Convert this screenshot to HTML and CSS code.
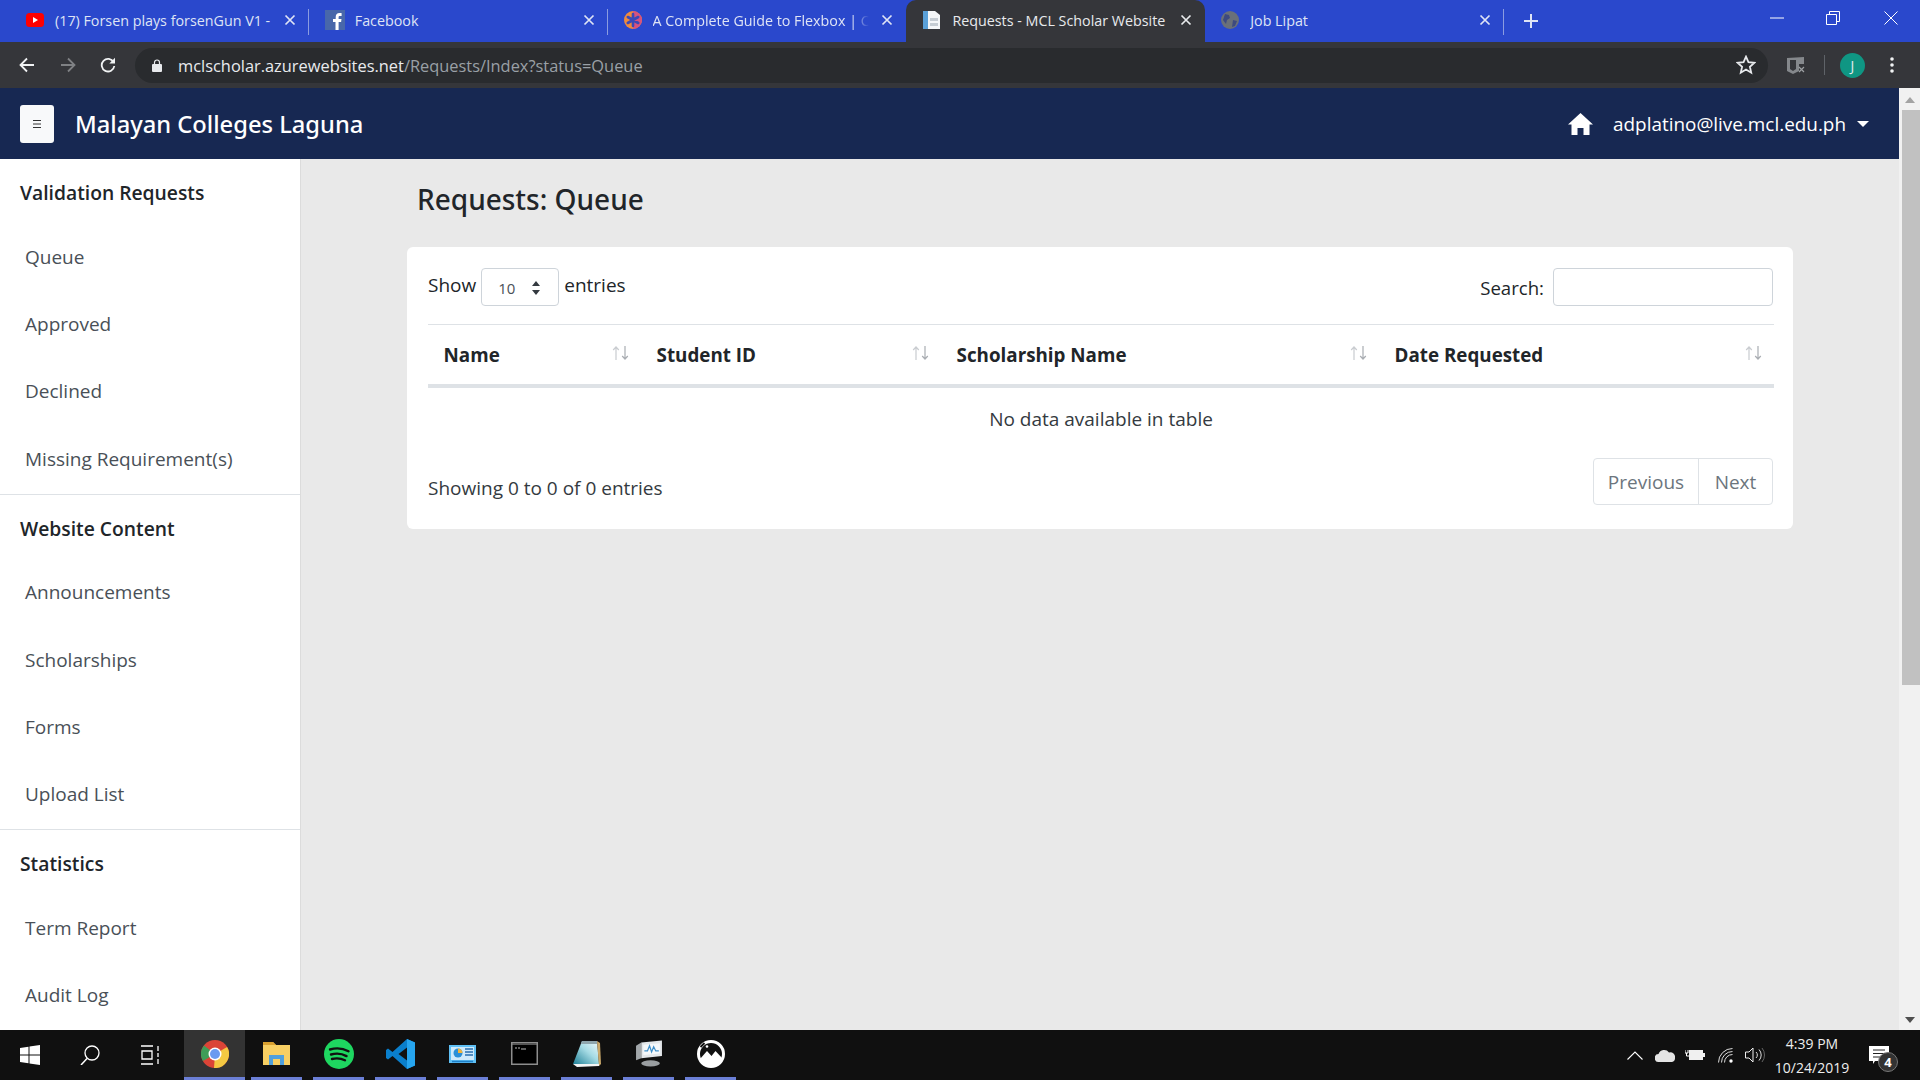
FILE: index.html
```html
<!DOCTYPE html>
<html lang="en">
<head>
    <meta charset="UTF-8">
    <title>Requests - MCL Scholar Website</title>
    <link rel="stylesheet" href="styles.css">
</head>
<body>
<svg class="defs" width="0" height="0">
    <defs>
        <linearGradient id="note-page" x1="0" y1="1" x2="1" y2="0">
            <stop offset="0" stop-color="#1f7f96"/>
            <stop offset=".55" stop-color="#a5dbe4"/>
            <stop offset="1" stop-color="#f2fafb"/>
        </linearGradient>
    </defs>
    <symbol id="sort" viewBox="0 0 17 14">
        <path d="M4 14V1M1.2 4 4 1l2.8 3" fill="none" stroke="#c9ccd0" stroke-width="1.2"/>
        <path d="M13 0v13M10.2 10 13 13l2.8-3" fill="none" stroke="#a9adb2" stroke-width="1.2"/>
    </symbol>
    <symbol id="close" viewBox="0 0 12 12">
        <path d="M1.5 1.5l9 9M10.5 1.5l-9 9" fill="none" stroke="currentColor" stroke-width="1.7"/>
    </symbol>
</svg>
<div class="screen">
    <div class="tabbar">
        <div class="tab">
            <svg class="favicon" viewBox="0 0 18 18"><rect y="2" width="18" height="14" rx="3.5" fill="#f00"/><path d="M7 6l5 3-5 3z" fill="#fff"/></svg>
            <span class="tab-title">(17) Forsen plays forsenGun V1 -</span>
            <svg class="tab-close"><use href="#close"/></svg>
        </div>
        <div class="tab">
            <svg class="favicon favicon-fb" viewBox="0 0 20 20"><rect width="20" height="20" fill="#4867aa"/><path d="M13.6 20v-8h2.5l.4-3h-2.9V7.3c0-.9.3-1.4 1.5-1.4h1.5V3.200c-.3 0-1.200-.1-2.200-.1-2.200 0-3.700 1.300-3.700 3.800V9H8v3h2.500v8z" fill="#fff"/></svg>
            <span class="tab-title">Facebook</span>
            <svg class="tab-close"><use href="#close"/></svg>
        </div>
        <div class="tab">
            <svg class="favicon" viewBox="0 0 18 18"><circle cx="9" cy="9" r="9" fill="#f08a3c"/><path d="M9 0a9 9 0 0 1 0 18z" fill="#d8527e"/><path d="M9 3v12M3.800 6l10.400 6M14.200 6 3.800 12" stroke="#3a49b8" stroke-width="2.600" stroke-linecap="round"/></svg>
            <span class="tab-title tab-fade">A Complete Guide to Flexbox | CS</span>
            <svg class="tab-close"><use href="#close"/></svg>
        </div>
        <div class="tab tab-active">
            <svg class="favicon favicon-doc" viewBox="0 0 20 20"><path d="M1 1h12l5 4v14H1z" fill="#f4f6f8"/><path d="M1 1h5v18H1z" fill="#5aa0d8"/><path d="M8 8h8v3H8zM8 13h8v3H8z" fill="#c5ccd3"/></svg>
            <span class="tab-title">Requests - MCL Scholar Website</span>
            <svg class="tab-close"><use href="#close"/></svg>
        </div>
        <div class="tab">
            <svg class="favicon" viewBox="0 0 18 18"><circle cx="9" cy="9" r="9" fill="#6a7079"/><path d="M4 3l4 1 1 3-3 2-1 4-3-4zM12 9l4 1-2 5-3 1z" fill="#3d4a80"/></svg>
            <span class="tab-title">Job Lipat</span>
            <svg class="tab-close"><use href="#close"/></svg>
        </div>
        <svg class="new-tab" viewBox="0 0 16 16"><path d="M8 1v14M1 8h14" stroke="#dfe4f5" stroke-width="2"/></svg>
        <div class="window-btns">
            <svg class="win-min" viewBox="0 0 14 14"><path d="M0 7h14" stroke="#fff"/></svg>
            <svg viewBox="0 0 14 14"><path d="M.5 3.500h10v10H.5zM3.500 3.500V.5h10v10h-3" fill="none" stroke="#fff"/></svg>
            <svg viewBox="0 0 14 14"><path d="M.5.5l13 13M13.500.5l-13 13" stroke="#fff"/></svg>
        </div>
    </div>

    <div class="toolbar">
        <svg class="tool-icon" viewBox="0 0 16 16"><path d="M15 8H2M8 1.500 1.500 8 8 14.500" fill="none" stroke="#f1f3f4" stroke-width="1.800"/></svg>
        <svg class="tool-icon" viewBox="0 0 16 16"><path d="M1 8h13M8 1.500 14.500 8 8 14.500" fill="none" stroke="#7f8184" stroke-width="1.800"/></svg>
        <svg class="tool-icon" viewBox="0 0 16 16"><path d="M13.600 5.200A6.300 6.300 0 1 0 14.300 9" fill="none" stroke="#f1f3f4" stroke-width="1.800"/><path d="M15 .8V6.500H9.300z" fill="#f1f3f4"/></svg>
        <div class="omnibox">
            <svg class="lock" viewBox="0 0 10 13"><path d="M2.500 5.500V3.500a2.500 2.500 0 0 1 5 0v2" fill="none" stroke="#e8eaed" stroke-width="1.200"/><rect y="5" width="10" height="8" rx="1" fill="#e8eaed"/></svg>
            <span class="url">mclscholar.azurewebsites.net<span class="url-path">/Requests/Index?status=Queue</span></span>
            <svg class="star" viewBox="0 0 18 18"><path d="M9 1.500l2.200 5 5.400.5-4.100 3.600 1.200 5.300L9 13.100l-4.700 2.800 1.200-5.300L1.400 7l5.400-.5z" fill="none" stroke="#e8eaed" stroke-width="1.600"/></svg>
        </div>
        <svg class="ext" viewBox="0 0 18 17"><path d="M0 1l17-1v7h-5v7l-6 3-6-3z" fill="#85888c"/><path d="M3 3h6v9l-3 2-3-2z" fill="#35363a"/><path d="M12 10l5 5M17 10l-5 5" stroke="#9da0a3" stroke-width="1.200"/></svg>
        <div class="tool-sep"></div>
        <div class="avatar">J</div>
        <svg class="dots" viewBox="0 0 4 16"><circle cx="2" cy="2" r="1.800" fill="#f1f3f4"/><circle cx="2" cy="8" r="1.800" fill="#f1f3f4"/><circle cx="2" cy="14" r="1.800" fill="#f1f3f4"/></svg>
    </div>

    <div class="viewport">
        <div class="page">
            <nav class="navbar">
                <button class="menu-btn">
                    <svg viewBox="0 0 8 8"><path d="M0 .5h8M0 4h8M0 7.500h8" stroke="#333"/></svg>
                </button>
                <span class="brand">Malayan Colleges Laguna</span>
                <svg class="home" viewBox="0 0 25 22"><path d="M12.500 0 25 11.500h-3.500V22h-6v-7h-6v7h-6V11.500H0z" fill="#fff"/></svg>
                <span class="user">adplatino@live.mcl.edu.ph</span>
                <span class="caret"></span>
            </nav>
            <div class="page-body">
                <aside class="sidebar">
                    <section class="side-group">
                        <h2>Validation Requests</h2>
                        <a>Queue</a>
                        <a>Approved</a>
                        <a>Declined</a>
                        <a>Missing Requirement(s)</a>
                    </section>
                    <section class="side-group">
                        <h2>Website Content</h2>
                        <a>Announcements</a>
                        <a>Scholarships</a>
                        <a>Forms</a>
                        <a>Upload List</a>
                    </section>
                    <section class="side-group">
                        <h2>Statistics</h2>
                        <a>Term Report</a>
                        <a>Audit Log</a>
                    </section>
                </aside>
                <main class="content">
                    <h1>Requests: Queue</h1>
                    <div class="card">
                        <div class="card-top">
                            <div class="length">
                                <span>Show</span>
                                <div class="select">
                                    <span>10</span>
                                    <svg viewBox="0 0 10 14"><path d="M5 0l4 5H1zM5 14l4-5H1z" fill="#343a40"/></svg>
                                </div>
                                <span>entries</span>
                            </div>
                            <div class="search">
                                <label for="search">Search:</label>
                                <input id="search" type="text">
                            </div>
                        </div>
                        <table class="data">
                            <thead>
                                <tr>
                                    <th class="col-name"><div>Name<svg><use href="#sort"/></svg></div></th>
                                    <th class="col-id"><div>Student ID<svg><use href="#sort"/></svg></div></th>
                                    <th class="col-scholar"><div>Scholarship Name<svg><use href="#sort"/></svg></div></th>
                                    <th><div>Date Requested<svg><use href="#sort"/></svg></div></th>
                                </tr>
                            </thead>
                            <tbody>
                                <tr><td colspan="4">No data available in table</td></tr>
                            </tbody>
                        </table>
                        <div class="card-bottom">
                            <span class="info">Showing 0 to 0 of 0 entries</span>
                            <div class="pager">
                                <a>Previous</a>
                                <a>Next</a>
                            </div>
                        </div>
                    </div>
                </main>
            </div>
        </div>
        <div class="scrollbar">
            <span class="arrow-up"></span>
            <div class="thumb"></div>
            <span class="arrow-down"></span>
        </div>
    </div>

    <div class="taskbar">
        <svg class="sys-icon sys-start" viewBox="0 0 20 20"><path d="M0 3l8.500-1.200V9.500H0zM9.500 1.600 20 0v9.500H9.500zM0 10.500h8.500v7.700L0 17zM9.500 10.500H20V20L9.500 18.400z" fill="#fff"/></svg>
        <svg class="sys-icon sys-search" viewBox="0 0 20 20"><circle cx="12" cy="8" r="7" fill="none" stroke="#fff" stroke-width="1.300"/><path d="M7 13.500 1 20" stroke="#fff" stroke-width="1.500"/></svg>
        <svg class="sys-icon sys-view" viewBox="0 0 20 20"><path d="M1 1h12M1 19h12M2 6h10v8H2zM18 1v5M18 8v4M18 14v5" fill="none" stroke="#fff" stroke-width="1.300"/></svg>
        <div class="task-apps">
            <div class="app app-active">
                <svg class="ico-chrome" viewBox="0 0 28 28"><circle cx="14" cy="14" r="14" fill="#db4437"/><path d="M14 14 1.900 21A14 14 0 0 1 3 5.500z" fill="#3f9d58"/><path d="M14 14 26.100 7A14 14 0 0 1 13 28z" fill="#f4c842"/><circle cx="14" cy="14" r="6.500" fill="#fff"/><circle cx="14" cy="14" r="5" fill="#6a9bf0"/></svg>
            </div>
            <div class="app">
                <svg class="ico-folder" viewBox="0 0 27 23"><path d="M0 0h10l3 3h14v20H0z" fill="#f7cf63"/><path d="M0 0h10l3 3H0z" fill="#d9a02f"/><path d="M6 23V13h15v10h-4v-6h-7v6z" fill="#4f9fdc"/></svg>
            </div>
            <div class="app">
                <svg class="ico-round" viewBox="0 0 30 30"><circle cx="15" cy="15" r="15" fill="#1ed760"/><path d="M6 10.500c6-1.800 13-1.200 18.500 1.700M7 15.500c5-1.400 11-.9 15.500 1.600M8 20c4.500-1.100 9-.7 13 1.300" fill="none" stroke="#111" stroke-width="2.400" stroke-linecap="round"/></svg>
            </div>
            <div class="app">
                <svg class="ico-round" viewBox="0 0 30 30"><path d="M21 0l8 3.500v23L21 30 6.500 17 2 20.500 0 19v-8l2-1.500 4.500 3.500z" fill="#0a7fcc"/><path d="M21 0l8 3.500v23L21 30z" fill="#26a5ef"/><path d="M21 8.500 12.500 15l8.500 6.500z" fill="#111"/></svg>
            </div>
            <div class="app">
                <svg class="ico-panel" viewBox="0 0 27 18"><rect width="27" height="18" fill="#5fc0f5"/><rect x="2" y="2" width="23" height="13" fill="#cfeafb"/><circle cx="9" cy="8" r="4.500" fill="#2a8fd8"/><path d="M9 8V3.500A4.500 4.500 0 0 1 13.500 8z" fill="#f0b43c"/><path d="M16 4h8M16 7h8M16 10h8" stroke="#2a6fb0" stroke-width="1.500"/><path d="M3 16.500h21" stroke="#1e7fc8" stroke-width="1.500"/></svg>
            </div>
            <div class="app">
                <svg class="ico-folder" viewBox="0 0 27 23"><rect width="27" height="23" fill="#8d8d8d"/><rect x="1.500" y="3" width="24" height="18.500" fill="#000"/><rect x="1.500" y="1" width="24" height="2" fill="#555"/><path d="M4 6h2M7 6h2M10 7h5" stroke="#bbb"/></svg>
            </div>
            <div class="app">
                <svg class="ico-note" viewBox="0 0 28 27"><path d="M9 1h15l2 23H0z" fill="url(#note-page)"/><path d="M9 1h15l.3 3H8z" fill="#8fa6ad"/><path d="M24 1l3 2 1 21-2 2z" fill="#c9a86a"/><path d="M0 24l26 0 0 2-22 1z" fill="#f4f4f4"/></svg>
            </div>
            <div class="app">
                <svg class="ico-note" viewBox="0 0 27 25"><path d="M6 2 26 0v15L6 17z" fill="#e3e7ea"/><path d="M8 4 24 2.500v10L8 14z" fill="#f5f8fa"/><path d="M9 10h3l2-5 2 6 2-5 2 4h3" fill="none" stroke="#3f8fc9" stroke-width="1.200"/><path d="M1 5l5-3v15l-5 2z" fill="#a2a7aa"/><ellipse cx="15" cy="22" rx="9" ry="3" fill="#9a9ea1"/></svg>
            </div>
            <div class="app">
                <svg class="ico-round" viewBox="0 0 30 30"><circle cx="15" cy="15" r="12.500" fill="#111" stroke="#fff" stroke-width="3"/><path d="M4 20 11 12l4.500 5 4-5L27 20a13 13 0 0 1-23 0z" fill="#fff"/><path d="M4.500 8 8.500 4" stroke="#111" stroke-width="2"/><circle cx="11" cy="7.500" r="1.300" fill="#fff"/></svg>
            </div>
        </div>
        <div class="tray">
            <svg class="tray-chevron" viewBox="0 0 16 9"><path d="M.5 8.500 8 1l7.500 7.500" fill="none" stroke="#fff" stroke-width="1.100"/></svg>
            <svg class="tray-cloud" viewBox="0 0 20 13"><path d="M4 13a4 4 0 0 1-.5-8A6 6 0 0 1 14 3.500 4.800 4.800 0 0 1 20 9a4 4 0 0 1-3 4z" fill="#e4e4e4"/></svg>
            <svg class="tray-battery" viewBox="0 0 20 12"><path d="M4 1h14v3h2v4h-2v3H4z" fill="#f0f0f0"/><path d="M0 1v3h3V1M1.500 4v3H4" fill="none" stroke="#fff"/></svg>
            <svg class="tray-wifi" viewBox="0 0 17 15"><path d="M.5 14.500a14 14 0 0 1 14-14M3.500 14.500a11 11 0 0 1 11-11M6.500 14.500a8 8 0 0 1 8-8" fill="none" stroke="#ddd"/><circle cx="13" cy="13" r="1.700" fill="#fff"/></svg>
            <svg class="tray-sound" viewBox="0 0 20 16"><path d="M.5 5h3.500L8 1v14l-4-4H.5z" fill="none" stroke="#eee"/><path d="M11 5a4 4 0 0 1 0 6M14 2.500a8 8 0 0 1 0 11" fill="none" stroke="#ddd"/><path d="M17 1a11 11 0 0 1 0 14" fill="none" stroke="#666"/></svg>
            <div class="clock">
                <span>4:39 PM</span>
                <span>10/24/2019</span>
            </div>
            <div class="notif">
                <svg viewBox="0 0 20 18"><path d="M0 0h20v15H6l-2 3v-3H0z" fill="#fff"/><path d="M4 4h12M4 7.500h12M4 11h8" stroke="#222"/></svg>
                <span class="notif-count">4</span>
            </div>
        </div>
    </div>
</div>
</body>
</html>
```

FILE: styles.css
```css
html, body { margin: 0; height: 1080px; overflow: hidden; }
body { font-family: "Open Sans", "Noto Sans", Arial, sans-serif; color: #212529; background: #e9e9e9; }
.defs { position: absolute; }
.screen { height: 1080px; display: flex; flex-direction: column; }

/* browser chrome */
.tabbar { height: 42px; background: #2a48cc; display: flex; align-items: center; padding-left: 10px; color: #dfe4f5; font-size: 14.3px; }
.tab { width: 298.8px; height: 42px; box-sizing: border-box; padding: 0 13px 2px 16px; display: flex; align-items: center; position: relative; }
.tab:not(.tab-active)::after { content: ""; position: absolute; right: 0; top: 9px; height: 26px; width: 1px; background: #8b9ce0; }
.tab:nth-child(3)::after { display: none; }
.tab-active { background: #35363a; color: #e8eaed; border-radius: 10px 10px 0 0; height: 42px; }
.favicon { width: 18px; height: 18px; flex: none; margin-right: 11px; }
.favicon-fb, .favicon-doc { width: 20px; height: 20px; margin-right: 10px; }
.tab-title { flex: 1; white-space: nowrap; overflow: hidden; }
.tab-fade { -webkit-mask-image: linear-gradient(90deg, #000 92%, transparent); mask-image: linear-gradient(90deg, #000 92%, transparent); }
.tab-close { width: 12px; height: 12px; flex: none; margin-left: 12px; }
.new-tab { width: 16px; height: 16px; margin-left: 19px; }
.window-btns { margin-left: auto; margin-right: 22px; display: flex; gap: 44px; align-self: flex-start; padding-top: 11px; }
.window-btns svg { width: 14px; height: 14px; }
.window-btns .win-min { margin-right: -2px; }

.toolbar { height: 46px; background: #35363a; display: flex; align-items: center; padding-left: 19px; }
.tool-icon { width: 16px; height: 16px; margin-right: 25px; }
.tool-icon:nth-child(3) { margin-left: -1px; }
.omnibox { width: 1633px; height: 35px; margin-left: -6px; background: #292b2e; border-radius: 18px; display: flex; align-items: center; box-sizing: border-box; padding: 0 12px 0 17px; color: #e8eaed; font-size: 16.4px; }
.lock { width: 10px; height: 13px; margin-right: 16px; }
.url { flex: 1; white-space: nowrap; }
.url-path { color: #9aa0a6; }
.star { width: 20px; height: 20px; }
.ext { width: 18px; height: 17px; margin-left: 19px; }
.tool-sep { width: 1px; height: 20px; background: #5f6368; margin-left: 19px; }
.avatar { width: 25px; height: 25px; border-radius: 50%; background: #0f9683; color: #e8eaed; font-size: 14px; display: flex; align-items: center; justify-content: center; margin-left: 15px; }
.dots { width: 4px; height: 16px; margin-left: 25px; }

/* page */
.viewport { flex: 1; display: flex; min-height: 0; }
.page { flex: 1; display: flex; flex-direction: column; min-width: 0; }
.navbar { height: 71px; background: #172852; display: flex; align-items: center; padding-left: 20px; color: #fff; flex: none; }
.menu-btn { width: 34px; height: 38px; background: #f8f9fa; border: 0; border-radius: 3px; padding: 0; display: flex; align-items: center; justify-content: center; }
.menu-btn svg { width: 8px; height: 8px; }
.brand { font-family: "Noto Sans", "Open Sans", sans-serif; font-size: 23.7px; font-weight: 500; margin-left: 21px; }
.home { width: 25px; height: 22px; margin-left: auto; }
.user { font-size: 18.9px; margin-left: 20px; }
.caret { width: 0; height: 0; border: 6px solid transparent; border-top-color: #fff; border-bottom: 0; margin: 0 30px 0 11px; }

.page-body { flex: 1; display: flex; min-height: 0; }
.sidebar { width: 301px; box-sizing: border-box; background: #fff; border-right: 1px solid #dcdcdc; flex: none; }
.side-group { border-bottom: 1px solid #dee2e6; padding-bottom: 1px; }
.side-group:last-child { border-bottom: 0; }
.side-group h2 { margin: 0; height: 64px; box-sizing: border-box; padding: 3px 0 0 20px; display: flex; align-items: center; font-size: 19.3px; font-weight: 600; color: #212529; }
.side-group a { display: flex; align-items: center; height: 67.4px; padding-left: 25px; font-size: 19px; color: #495057; }

.content { flex: 1; padding: 0 106px 0 106px; min-width: 0; }
.content h1 { font-family: "Noto Sans", "Open Sans", sans-serif; margin: 0; height: 88px; box-sizing: border-box; padding: 21px 0 0 10px; font-size: 28px; font-weight: 500; color: #212529; }
.card { background: #fff; border-radius: 6px; box-sizing: border-box; height: 282px; padding: 21px 20px 0 21px; font-size: 19px; }
.card-top { display: flex; justify-content: space-between; align-items: center; height: 38px; margin-bottom: 18px; }
.length { display: flex; align-items: center; gap: 5px; margin-top: -5px; }
.select { width: 78px; height: 38px; margin-top: 5px; box-sizing: border-box; border: 1px solid #ced4da; border-radius: 4px; display: flex; align-items: center; justify-content: space-between; padding: 1px 17px 0 16px; font-size: 15px; color: #495057; }
.select svg { width: 10px; height: 14px; }
.search { display: flex; align-items: center; gap: 9px; }
.search label { font-size: 18.6px; padding-top: 1px; }
.search input { width: 220px; height: 38px; box-sizing: border-box; border: 1px solid #ced4da; border-radius: 4px; margin: 0; }

.data { width: 1346px; border-collapse: collapse; table-layout: fixed; border-top: 1px solid #dee2e6; }
.data th { height: 61px; box-sizing: border-box; padding: 2px 12px 0 15.6px; text-align: left; font-weight: 700; border-bottom: 4px solid #dee2e6; font-size: 18.8px; }
.data th div { display: flex; justify-content: space-between; align-items: center; }
.data th svg { width: 17px; height: 14px; margin-top: -5px; }
.col-name { width: 213px; }
.col-id { width: 300px; }
.col-scholar { width: 438px; }
.data td { height: 62px; padding: 0; text-align: center; color: #343a40; }

.card-bottom { display: flex; justify-content: space-between; align-items: flex-start; margin-top: 8px; color: #343a40; }
.info { margin-top: 17px; }
.pager { display: flex; height: 47px; box-sizing: border-box; border: 1px solid #dee2e6; border-radius: 4px; color: #6c757d; }
.pager a { display: flex; align-items: center; justify-content: center; padding-top: 2px; }
.pager a:first-child { width: 104px; border-right: 1px solid #dee2e6; }
.pager a:last-child { width: 73px; }

.scrollbar { width: 21px; flex: none; background: #f1f1f1; display: flex; flex-direction: column; align-items: center; }
.arrow-up { width: 0; height: 0; border: 5px solid transparent; border-bottom: 6px solid #a3a3a3; border-top: 0; margin: 9px 0 7px; }
.thumb { width: 18px; height: 575px; background: #c1c1c1; margin-left: 2px; }
.arrow-down { width: 0; height: 0; border: 5px solid transparent; border-top: 6px solid #505050; border-bottom: 0; margin-top: auto; margin-bottom: 7px; }

/* windows taskbar */
.taskbar { height: 50px; background: #101010; display: flex; align-items: center; color: #fff; flex: none; }
.sys-icon { width: 20px; height: 20px; flex: none; }
.sys-start { margin-left: 20px; }
.sys-search { margin-left: 40px; }
.sys-view { margin-left: 40px; }
.task-apps { display: flex; margin-left: 24px; gap: 11px; height: 50px; }
.app { width: 51px; height: 50px; box-sizing: border-box; border-bottom: 3px solid #6b7fd6; display: flex; align-items: center; justify-content: center; }
.app-active { width: 61px; background: #333; margin-right: -5px; }
.ico-chrome { width: 28px; height: 28px; }
.ico-folder { width: 27px; height: 23px; }
.ico-round { width: 30px; height: 30px; }
.ico-panel { width: 27px; height: 18px; }
.ico-note { width: 28px; height: 27px; }
.tray { margin-left: auto; display: flex; align-items: center; height: 50px; }
.tray svg { flex: none; }
.tray-chevron { width: 16px; height: 9px; }
.tray-cloud { width: 20px; height: 13px; margin-left: 12px; }
.tray-battery { width: 20px; height: 12px; margin-left: 10px; }
.tray-wifi { width: 17px; height: 15px; margin-left: 13px; }
.tray-sound { width: 20px; height: 16px; margin-left: 10px; }
.clock { width: 84px; margin-left: 5px; padding-top: 2px; display: flex; flex-direction: column; align-items: center; font-size: 14px; line-height: 24px; color: #eee; }
.notif { position: relative; width: 20px; height: 18px; margin: 0 31px 0 15px; }
.notif svg { width: 20px; height: 18px; display: block; }
.notif-count { position: absolute; right: -9px; top: 6px; width: 20px; height: 20px; border-radius: 50%; background: #333; border: 1px solid #777; box-sizing: border-box; font-size: 13px; font-weight: 700; display: flex; align-items: center; justify-content: center; }
```
